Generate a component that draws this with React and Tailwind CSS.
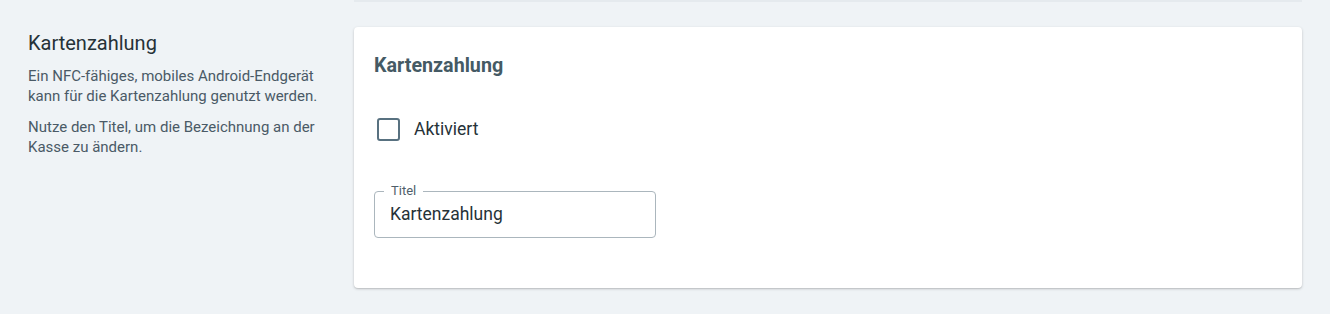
export default function App() {
  return (
    <div className="min-h-screen bg-[#eff3f6] font-['Roboto',sans-serif]">
      <div className="flex">
        {/* Section description */}
        <div className="w-[354px] shrink-0 pl-[28px] pr-[24px] pt-[29px]">
          <h3 className="text-[20px] leading-[28px] text-[#263238]">Kartenzahlung</h3>
          <p className="mt-[9px] text-[15px] leading-[20px] text-[#4a5a66]">
            Ein NFC-fähiges, mobiles Android-Endgerät kann für die Kartenzahlung genutzt werden.
          </p>
          <p className="mt-[11px] text-[15px] leading-[20px] text-[#4a5a66]">
            Nutze den Titel, um die Bezeichnung an der Kasse zu ändern.
          </p>
        </div>

        {/* Card */}
        <div className="flex-1 pr-[28px]">
          <div className="h-[2px] bg-[#e5eaee]" />
          <div className="mt-[25px] rounded-[4px] bg-white px-[20px] pt-[25px] pb-[50px] shadow-[0_1px_3px_rgba(0,0,0,0.18),0_1px_1px_rgba(0,0,0,0.08)]">
            <h2 className="text-[19.7px] leading-[28px] font-bold text-[#455a64]">Kartenzahlung</h2>

            <label className="mt-[29px] flex h-[40px] items-center gap-[14px] pl-[3px]">
              <span className="h-[23px] w-[23px] rounded-[3px] border-2 border-[#587180]" />
              <span className="text-[17.5px] text-[#263238]">Aktiviert</span>
            </label>

            <div className="relative mt-[42px] h-[47px] w-[282px] rounded-[4px] border border-[#abb6bd]">
              <span className="absolute left-[9px] top-[-10px] bg-white px-[7px] text-[13px] leading-[18px] text-[#4f5f6b]">
                Titel
              </span>
              <div className="flex h-full items-center pl-[15px] text-[17.5px] text-[#263238]">
                Kartenzahlung
              </div>
            </div>
          </div>
        </div>
      </div>
    </div>
  );
}
